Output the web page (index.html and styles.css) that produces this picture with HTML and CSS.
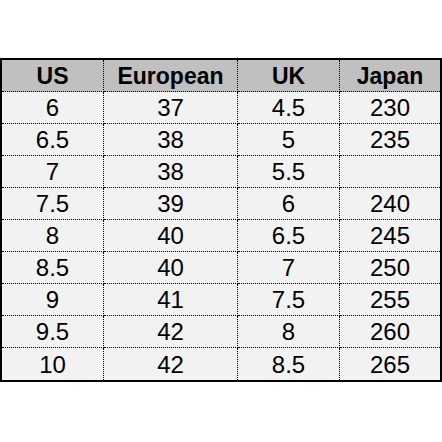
FILE: index.html
```html
<!DOCTYPE html>
<html>
<head>
<meta charset="utf-8">
<link rel="stylesheet" href="styles.css">
</head>
<body>
<table class="sizes">
  <colgroup>
    <col class="c1"><col class="c2"><col class="c3"><col class="c4">
  </colgroup>
  <thead>
    <tr><th>US</th><th>European</th><th>UK</th><th>Japan</th></tr>
  </thead>
  <tbody>
    <tr><td>6</td><td>37</td><td>4.5</td><td>230</td></tr>
    <tr><td>6.5</td><td>38</td><td>5</td><td>235</td></tr>
    <tr><td>7</td><td>38</td><td>5.5</td><td></td></tr>
    <tr><td>7.5</td><td>39</td><td>6</td><td>240</td></tr>
    <tr><td>8</td><td>40</td><td>6.5</td><td>245</td></tr>
    <tr><td>8.5</td><td>40</td><td>7</td><td>250</td></tr>
    <tr><td>9</td><td>41</td><td>7.5</td><td>255</td></tr>
    <tr><td>9.5</td><td>42</td><td>8</td><td>260</td></tr>
    <tr><td>10</td><td>42</td><td>8.5</td><td>265</td></tr>
  </tbody>
</table>
</body>
</html>
```
FILE: styles.css
```css
html, body {
  margin: 0;
  padding: 0;
  background: #ffffff;
}

.sizes {
  margin-top: 58px;
  width: 442px;
  border: 2px solid #000;
  border-collapse: separate;
  border-spacing: 0;
  table-layout: fixed;
  font-family: "Liberation Sans", Arial, sans-serif;
  color: #000;
}

.c1 { width: 102px; }
.c2 { width: 134px; }
.c3 { width: 102px; }
.c4 { width: 100px; }

.sizes th,
.sizes td {
  padding: 1px 0 0 0;
  text-align: center;
  vertical-align: middle;
  border-right: 1px dotted #000;
  border-bottom: 1px dotted #000;
  box-sizing: border-box;
}

.sizes th:last-child,
.sizes td:last-child {
  border-right: none;
}

.sizes tbody tr:last-child td {
  border-bottom: none;
}

.sizes th {
  background: #c0c0c0;
  font-weight: bold;
  font-size: 23px;
  height: 32px;
  line-height: 30px;
}

.sizes td {
  background: #f2f2f2;
  font-size: 24px;
  height: 32px;
  line-height: 30px;
}
```
